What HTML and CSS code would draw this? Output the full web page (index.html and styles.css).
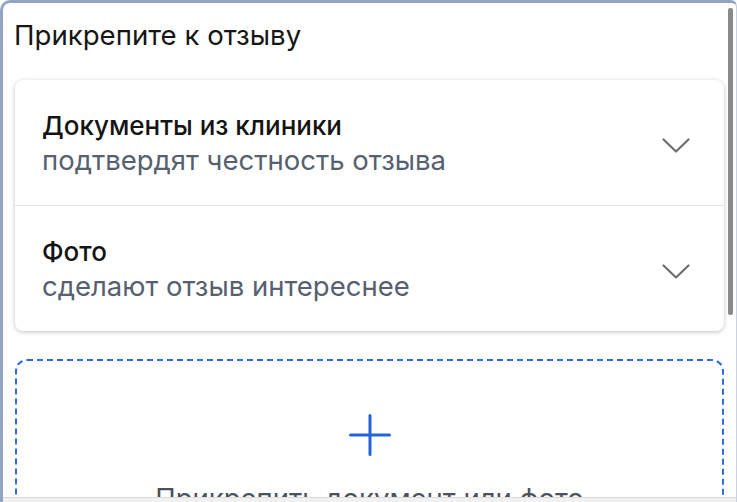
FILE: index.html
```
<!DOCTYPE html>
<html>
    <head>
        <meta charset="utf-8" />
        <title>Прикрепите к отзыву</title>
        <link rel="stylesheet" href="styles.css">
    </head>
    <body>
        <div class="frame">
            <div class="content">
                <div class="heading">Прикрепите к отзыву</div>
                <div class="card">
                    <div class="row">
                        <div class="row-text">
                            <div class="row-title">Документы из клиники</div>
                            <div class="row-sub">подтвердят честность отзыва</div>
                        </div>
                        <svg class="chevron" width="28" height="15" viewBox="0 0 28 15">
                            <path d="M1.5 1.5 L14 13.5 L26.5 1.5" fill="none" stroke="#6e6e6e" stroke-width="2.2" stroke-linecap="round" stroke-linejoin="round"/>
                        </svg>
                    </div>
                    <div class="row">
                        <div class="row-text">
                            <div class="row-title">Фото</div>
                            <div class="row-sub">сделают отзыв интереснее</div>
                        </div>
                        <svg class="chevron" width="28" height="15" viewBox="0 0 28 15">
                            <path d="M1.5 1.5 L14 13.5 L26.5 1.5" fill="none" stroke="#6e6e6e" stroke-width="2.2" stroke-linecap="round" stroke-linejoin="round"/>
                        </svg>
                    </div>
                </div>
                <div class="drop">
                    <svg class="plus" width="42" height="42" viewBox="0 0 42 42">
                        <path d="M21 1.5 V40.5 M1.5 21 H40.5" fill="none" stroke="#2563d9" stroke-width="3" stroke-linecap="round"/>
                    </svg>
                    <div class="drop-text">Прикрепить документ или фото</div>
                </div>
            </div>
            <div class="scrollbar"></div>
            <div class="bottom-edge"></div>
        </div>
    </body>
</html>
```
FILE: styles.css
```
html, body {
    height: 100vh;
    margin: 0;
    padding: 0;
    background: #fff;
    overflow: hidden;
}
body {
    font-family: Inter, "Noto Sans", sans-serif;
    color: #1c1c1e;
}
.frame {
    position: relative;
    box-sizing: border-box;
    height: 100vh;
    border-left: 3px solid #93a6c1;
    border-top: 3px solid #93a6c1;
    border-right: 1px solid #c9d3e0;
    border-top-left-radius: 10px;
    border-top-right-radius: 6px;
    overflow: hidden;
}
.content {
    padding: 16px 12px 0 11px;
}
.heading {
    font-size: 27.6px;
    line-height: 33px;
    color: #161616;
}
.card {
    margin: 28px 0 0 1px;
    border-radius: 8px;
    background: #fff;
    box-shadow: 0 1px 4px rgba(0, 0, 0, 0.25);
}
.row {
    display: flex;
    align-items: center;
    padding: 29px 34px 27px 27px;
    height: 69px;
}
.row + .row {
    border-top: 1px solid #e2e2e2;
}
.row-text {
    flex: 1;
}
.row-title {
    font-size: 26px;
    font-weight: 500;
    line-height: 34px;
    color: #141414;
}
.row-sub {
    font-size: 27.5px;
    line-height: 35px;
    color: #566070;
}
.chevron {
    margin-top: 4px;
}
.drop {
    margin: 28px 0 0 1px;
    height: 200px;
    border: 2px dashed #2f6be3;
    border-radius: 12px;
    display: flex;
    flex-direction: column;
    align-items: center;
    padding-top: 53px;
    box-sizing: border-box;
}
.drop-text {
    margin-top: 25px;
    font-size: 27.5px;
    line-height: 34px;
    color: #4a5260;
}
.scrollbar {
    position: absolute;
    top: 5px;
    right: 3px;
    width: 5px;
    height: 307px;
    background: #8a8a8a;
    border-radius: 2px;
}
.bottom-edge {
    position: absolute;
    left: 0;
    right: 0;
    bottom: 0;
    height: 4px;
    border-top: 1px solid #dcdcdc;
    background: #f1f1f1;
}
```
